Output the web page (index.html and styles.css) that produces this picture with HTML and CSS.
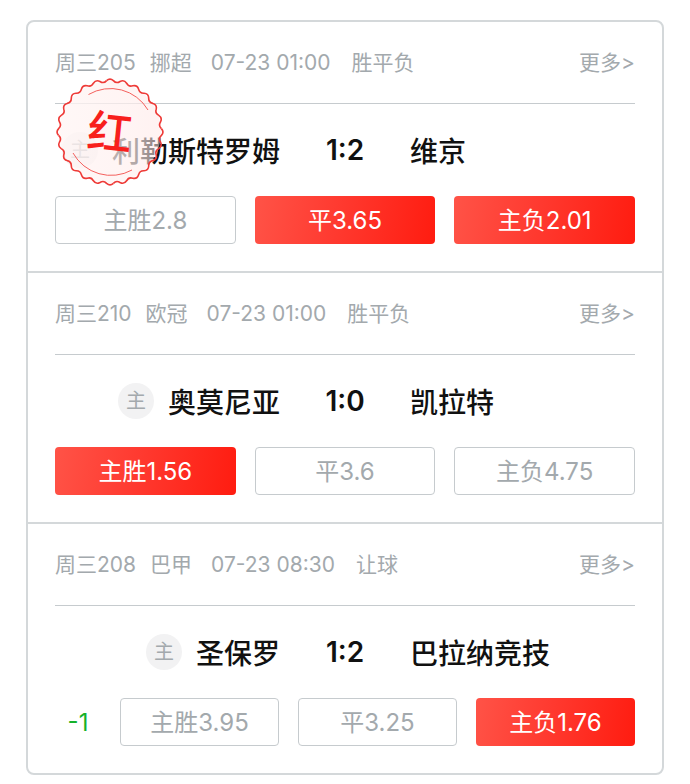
FILE: index.html
```html
<!DOCTYPE html>
<html lang="zh-CN">
<head>
  <meta charset="UTF-8">
  <meta name="viewport" content="width=device-width, initial-scale=1.0">
  <title>竞彩推荐</title>
  <link rel="stylesheet" href="styles.css">
</head>
<body>
  <main class="card">
    <section class="match">
      <header class="match-head">
        <span class="no">周三205</span>
        <span class="league">挪超</span>
        <time class="time">07-23 01:00</time>
        <span class="type">胜平负</span>
        <a class="more" href="#">更多&gt;</a>
      </header>
      <div class="teams">
        <div class="home"><span class="badge">主</span><span>利勒斯特罗姆</span></div>
        <div class="score">1:2</div>
        <div class="away">维京</div>
      </div>
      <div class="odds">
        <button type="button" class="odd">主胜2.8</button>
        <button type="button" class="odd active">平3.65</button>
        <button type="button" class="odd active">主负2.01</button>
      </div>
      <!-- result stamp -->
      <svg class="stamp" viewBox="-55 -55 110 110" role="img" aria-label="红">
        <defs>
          <linearGradient id="stampFill" x1="0" y1="0" x2="1" y2="0">
            <stop offset="0" stop-color="#fff6f5" stop-opacity="0.8"/>
            <stop offset="0.75" stop-color="#ffefee" stop-opacity="0.68"/>
            <stop offset="1" stop-color="#ffe6e5" stop-opacity="0.5"/>
          </linearGradient>
          <path id="wave" d="M-3.4-51.4Q0-54.5 3.4-51.4Q6.3-48.1 10-50.5Q14.1-52.6 16.6-48.8Q18.6-44.8 22.8-46.2Q27.3-47.2 28.6-42.8Q29.5-38.5 34-38.7Q38.5-38.5 38.7-34Q38.5-29.5 42.8-28.6Q47.2-27.3 46.2-22.8Q44.8-18.6 48.8-16.6Q52.6-14.1 50.5-10Q48.1-6.3 51.4-3.4"/>
        </defs>
        <circle r="51" fill="url(#stampFill)"/>
        <g class="stamp-edge">
          <use href="#wave"/>
          <use href="#wave" transform="rotate(90)"/>
          <use href="#wave" transform="rotate(180)"/>
          <use href="#wave" transform="rotate(270)"/>
        </g>
        <path class="stamp-arc" d="M-21.5-37.5A43.5 43.5 0 0 1 38-22M-37 21A43.5 43.5 0 0 0 22 38"/>
        <text class="stamp-text" y="17" text-anchor="middle" transform="rotate(6)">红</text>
      </svg>
    </section>

    <section class="match">
      <header class="match-head">
        <span class="no">周三210</span>
        <span class="league">欧冠</span>
        <time class="time">07-23 01:00</time>
        <span class="type">胜平负</span>
        <a class="more" href="#">更多&gt;</a>
      </header>
      <div class="teams">
        <div class="home"><span class="badge">主</span><span>奥莫尼亚</span></div>
        <div class="score">1:0</div>
        <div class="away">凯拉特</div>
      </div>
      <div class="odds">
        <button type="button" class="odd active">主胜1.56</button>
        <button type="button" class="odd">平3.6</button>
        <button type="button" class="odd">主负4.75</button>
      </div>
    </section>

    <section class="match">
      <header class="match-head">
        <span class="no">周三208</span>
        <span class="league">巴甲</span>
        <time class="time">07-23 08:30</time>
        <span class="type">让球</span>
        <a class="more" href="#">更多&gt;</a>
      </header>
      <div class="teams">
        <div class="home"><span class="badge">主</span><span>圣保罗</span></div>
        <div class="score">1:2</div>
        <div class="away">巴拉纳竞技</div>
      </div>
      <div class="odds">
        <span class="handicap">-1</span>
        <button type="button" class="odd">主胜3.95</button>
        <button type="button" class="odd">平3.25</button>
        <button type="button" class="odd active">主负1.76</button>
      </div>
    </section>
  </main>
</body>
</html>
```

FILE: styles.css
```css
* {
  box-sizing: border-box;
}
body {
  margin: 0;
  padding: 20px 26px 8px;
  background-color: #fff;
  font-family: Inter, "Noto Sans CJK SC", sans-serif;
}
.card {
  border: 2px solid #d4d8da;
  border-radius: 8px;
}
.match {
  position: relative;
  padding: 0 27px 27px;
}
.match + .match {
  border-top: 2px solid #d4d8da;
}
.match-head {
  display: flex;
  align-items: center;
  padding: 26px 0 25px;
  border-bottom: 1px solid #c6cbce;
  color: #a3a9ad;
  font-size: 21px;
  font-weight: 400;
  line-height: 30px;
}
.league {
  margin-left: 14px;
}
.time {
  margin-left: 19px;
}
.type {
  margin-left: 21px;
}
.more {
  margin-left: auto;
  color: inherit;
  text-decoration: none;
}
.teams {
  display: grid;
  grid-template-columns: 1fr 130px 1fr;
  align-items: center;
  height: 92px;
  color: #111;
  font-size: 28px;
  font-weight: 500;
}
.home {
  display: flex;
  align-items: center;
  justify-content: flex-end;
  gap: 14px;
  white-space: nowrap;
}
.badge {
  width: 36px;
  height: 36px;
  border-radius: 50%;
  background-color: #f2f2f3;
  color: #a3a9ad;
  font-size: 20px;
  font-weight: 400;
  line-height: 36px;
  text-align: center;
}
.score {
  font-weight: 600;
  text-align: center;
}
.odds {
  display: flex;
  align-items: center;
  gap: 19px;
}
.odd {
  flex: 1;
  height: 48px;
  padding: 0 0 3px;
  border: 1px solid #c6cbce;
  border-radius: 4px;
  background-color: #fff;
  color: #a3a9ad;
  font-family: inherit;
  font-size: 24px;
  font-weight: 400;
  cursor: pointer;
}
.odd.active {
  border-color: transparent;
  background: linear-gradient(100deg, #ff5347, #ff3a30 45%, #ff1c10) border-box;
  color: #fff;
}
.handicap {
  width: 46px;
  color: #15b12b;
  font-size: 24px;
  text-align: center;
}
.stamp {
  position: absolute;
  top: 55px;
  left: 27px;
  width: 110px;
  height: 110px;
}
.stamp-edge {
  fill: none;
  stroke: #ee3b38;
  stroke-width: 1.6;
}
.stamp-arc {
  fill: none;
  stroke: #f4605d;
  stroke-width: 1;
}
.stamp-text {
  fill: #f8201c;
  font-size: 45px;
  font-weight: 500;
}
```
